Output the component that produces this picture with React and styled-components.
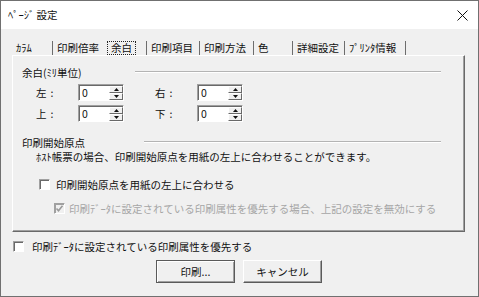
import styled, { createGlobalStyle } from "styled-components";

const GlobalStyle = createGlobalStyle`
  html, body {
    margin: 0;
    padding: 0;
    background: #f0f0f0;
  }
  body {
    font-family: "Noto Sans CJK JP", "Noto Sans", sans-serif;
    font-size: 10.5px;
    color: #111;
  }
`;

const Window = styled.div`
  width: 479px;
  height: 297px;
  box-sizing: border-box;
  border: 1px solid #707070;
  background: #f0f0f0;
  display: flex;
  flex-direction: column;
`;

const TitleBar = styled.div`
  height: 28px;
  background: #fff;
  display: flex;
  align-items: center;
  justify-content: space-between;
  padding: 0 10px 0 7px;
`;

const Title = styled.span`
  line-height: 14px;
`;

const Body = styled.div`
  display: flex;
  flex-direction: column;
  padding: 0 13px 0 11px;
`;

const TabStrip = styled.div`
  display: flex;
  height: 14px;
  margin-top: 12px;
`;

const Tab = styled.div`
  box-sizing: border-box;
  width: ${(p) => p.$width}px;
  padding-left: ${(p) => (p.$active ? 3 : 4)}px;
  line-height: 14px;
  white-space: nowrap;
  border-right: 1px solid ${(p) => (p.$noSep ? "transparent" : "#6d6d6d")};
`;

const FocusText = styled.span`
  display: inline-block;
  outline: 1px dotted #222;
  outline-offset: 0;
  padding: 0 3px;
  line-height: 12px;
  margin-top: 1px;
`;

const Panel = styled.div`
  height: 177px;
  box-sizing: border-box;
  border: 1px solid;
  border-color: #fff #696969 #696969 #fff;
  box-shadow: inset -1px -1px #a0a0a0;
  padding: 9px 23px 0 9px;
  display: flex;
  flex-direction: column;
`;

const GroupHeader = styled.div`
  display: flex;
  align-items: center;
  height: 14px;
  margin-top: ${(p) => p.$top || 0}px;
`;

const GroupLine = styled.div`
  flex: 1;
  margin-left: ${(p) => p.$gap}px;
  border-top: 1px solid #b4b4b4;
  border-bottom: 1px solid #fff;
`;

const SpinGrid = styled.div`
  display: grid;
  grid-template-columns: 42px 77px 42px 46px;
  grid-auto-rows: 17px;
  row-gap: 4px;
  align-items: center;
  margin: 5px 0 0 14px;
`;

const SpinLabel = styled.span`
  line-height: 14px;
`;

const Colon = styled.span`
  margin-left: 4px;
`;

const SpinBox = styled.div`
  width: 46px;
  height: 17px;
  box-sizing: border-box;
  display: flex;
  background: #fff;
  border: 1px solid;
  border-color: #a0a0a0 #fff #fff #a0a0a0;
  box-shadow: inset 1px 1px #696969;
`;

const SpinValue = styled.span`
  flex: 1;
  padding-left: 3px;
  line-height: 15px;
`;

const SpinButtons = styled.div`
  width: 14px;
  display: flex;
  flex-direction: column;
  padding-top: 1px;
`;

const SpinButton = styled.div`
  flex: 1;
  box-sizing: border-box;
  display: flex;
  align-items: center;
  justify-content: center;
  background: #f0f0f0;
  border: 1px solid;
  border-color: #fff #696969 #696969 #fff;
`;

const TextLine = styled.div`
  line-height: 14px;
  margin: ${(p) => p.$top || 0}px 0 0 ${(p) => p.$left || 0}px;
  white-space: nowrap;
`;

const CheckRow = styled.label`
  display: flex;
  align-items: center;
  gap: ${(p) => p.$gap}px;
  height: 14px;
  margin: ${(p) => p.$top}px 0 0 ${(p) => p.$left}px;
  white-space: nowrap;
  color: ${(p) => (p.$disabled ? "#a6a6a6" : "inherit")};
`;

const Box = styled.span`
  width: 11px;
  height: 11px;
  box-sizing: border-box;
  display: flex;
  align-items: center;
  justify-content: center;
  background: ${(p) => (p.$disabled ? "#f0f0f0" : "#fff")};
  border: 1px solid;
  border-color: #a0a0a0 #fff #fff #a0a0a0;
  box-shadow: inset 1px 1px ${(p) => (p.$disabled ? "#a0a0a0" : "#696969")};
`;

const ButtonRow = styled.div`
  display: flex;
  justify-content: center;
  gap: 8px;
  margin-top: 7px;
  padding-left: 1px;
`;

const Button = styled.div`
  width: 79px;
  height: 23px;
  box-sizing: border-box;
  display: flex;
  align-items: center;
  justify-content: center;
  background: #f0f0f0;
  border: 1px solid;
  border-color: ${(p) =>
    p.$default ? "#5a5a5a" : "#fff #5a5a5a #5a5a5a #fff"};
  box-shadow: ${(p) =>
    p.$default
      ? "inset 1px 1px #fff, inset -1px -1px #a0a0a0"
      : "inset -1px -1px #a0a0a0"};
`;

const tabs = [
  { label: "ｶﾗﾑ", width: 41 },
  { label: "印刷倍率", width: 52, noSep: true },
  { label: "余白", width: 42, active: true },
  { label: "印刷項目", width: 53 },
  { label: "印刷方法", width: 54 },
  { label: "色", width: 39 },
  { label: "詳細設定", width: 52 },
  { label: "ﾌﾟﾘﾝﾀ情報", width: 61 },
];

function CloseIcon() {
  return (
    <svg width="11" height="11" viewBox="0 0 11 11">
      <path d="M0.5 0.5 L10.5 10.5 M10.5 0.5 L0.5 10.5" stroke="#111" strokeWidth="1" />
    </svg>
  );
}

function Arrow({ up }) {
  return (
    <svg width="5" height="3" viewBox="0 0 5 3">
      <path d={up ? "M2.5 0 L5 3 L0 3 Z" : "M0 0 L5 0 L2.5 3 Z"} fill="#111" />
    </svg>
  );
}

function Spin({ value }) {
  return (
    <SpinBox>
      <SpinValue>{value}</SpinValue>
      <SpinButtons>
        <SpinButton>
          <Arrow up />
        </SpinButton>
        <SpinButton>
          <Arrow />
        </SpinButton>
      </SpinButtons>
    </SpinBox>
  );
}

function Check({ checked, disabled }) {
  return (
    <Box $disabled={disabled}>
      {checked && (
        <svg width="9" height="9" viewBox="0 0 9 9">
          <path d="M1.5 4.5 L3.5 6.8 L7.5 1.8" fill="none" stroke="#9a9a9a" strokeWidth="1.6" />
        </svg>
      )}
    </Box>
  );
}

export default function App() {
  return (
    <>
      <GlobalStyle />
      <Window>
        <TitleBar>
          <Title>ﾍﾟｰｼﾞ 設定</Title>
          <CloseIcon />
        </TitleBar>
        <Body>
          <TabStrip>
            {tabs.map((t) => (
              <Tab key={t.label} $width={t.width} $noSep={t.noSep} $active={t.active}>
                {t.active ? <FocusText>{t.label}</FocusText> : t.label}
              </Tab>
            ))}
          </TabStrip>
          <Panel>
            <GroupHeader>
              <span>余白(ﾐﾘ単位)</span>
              <GroupLine $gap={53} />
            </GroupHeader>
            <SpinGrid>
              <SpinLabel>左<Colon>:</Colon></SpinLabel>
              <Spin value="0" />
              <SpinLabel>右<Colon>:</Colon></SpinLabel>
              <Spin value="0" />
              <SpinLabel>上<Colon>:</Colon></SpinLabel>
              <Spin value="0" />
              <SpinLabel>下<Colon>:</Colon></SpinLabel>
              <Spin value="0" />
            </SpinGrid>
            <GroupHeader $top={13}>
              <span>印刷開始原点</span>
              <GroupLine $gap={59} />
            </GroupHeader>
            <TextLine $top={1} $left={14}>
              ﾎｽﾄ帳票の場合、印刷開始原点を用紙の左上に合わせることができます。
            </TextLine>
            <CheckRow $top={13} $left={17} $gap={6}>
              <Check />
              印刷開始原点を用紙の左上に合わせる
            </CheckRow>
            <CheckRow $top={10} $left={32} $gap={4} $disabled>
              <Check checked disabled />
              印刷ﾃﾞｰﾀに設定されている印刷属性を優先する場合、上記の設定を無効にする
            </CheckRow>
          </Panel>
          <CheckRow $top={7} $left={1} $gap={8}>
            <Check />
            印刷ﾃﾞｰﾀに設定されている印刷属性を優先する
          </CheckRow>
          <ButtonRow>
            <Button $default>印刷...</Button>
            <Button>キャンセル</Button>
          </ButtonRow>
        </Body>
      </Window>
    </>
  );
}
